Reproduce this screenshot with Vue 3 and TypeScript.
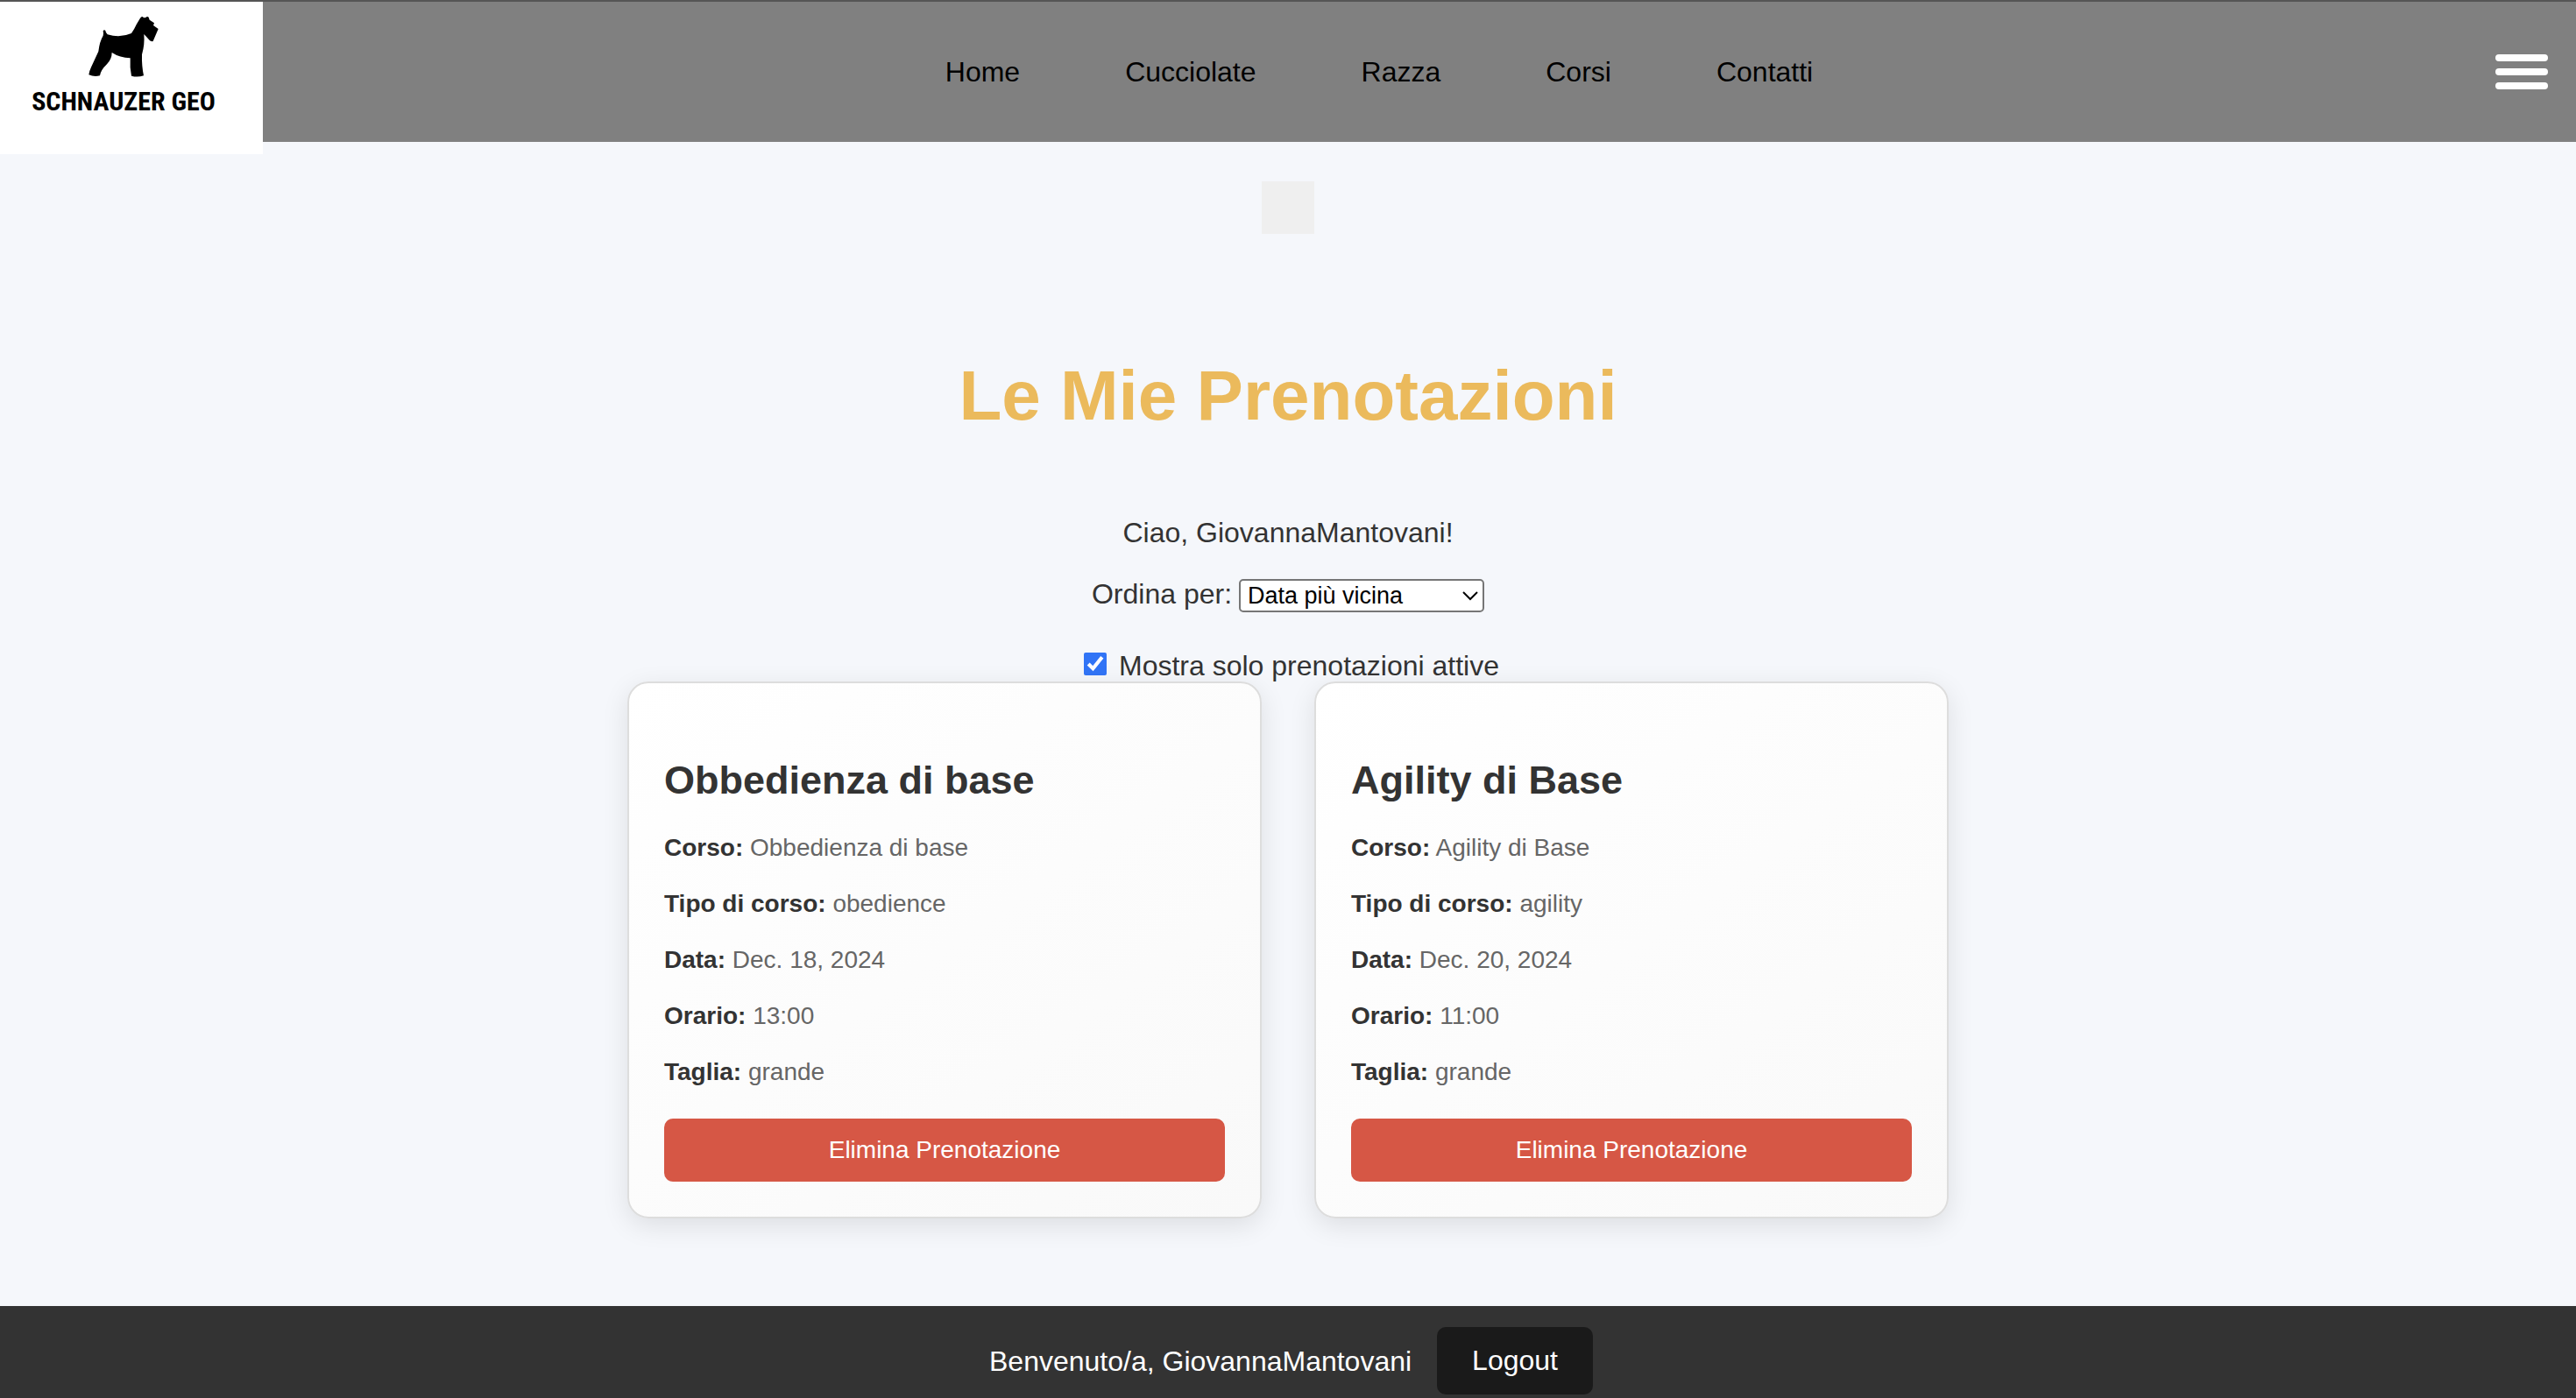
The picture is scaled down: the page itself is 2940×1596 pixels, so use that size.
<script setup lang="ts">
import { ref, computed } from 'vue'

interface Booking {
  id: number
  course: string
  type: string
  date: string
  time: string
  size: string
  day: number
}

const username = 'GiovannaMantovani'
const links: string[] = ['Home', 'Cucciolate', 'Razza', 'Corsi', 'Contatti']
const order = ref<'asc' | 'desc'>('asc')
const onlyActive = ref(true)

const bookings = ref<Booking[]>([
  { id: 1, course: 'Obbedienza di base', type: 'obedience', date: 'Dec. 18, 2024', time: '13:00', size: 'grande', day: 18 },
  { id: 2, course: 'Agility di Base', type: 'agility', date: 'Dec. 20, 2024', time: '11:00', size: 'grande', day: 20 },
])

const sorted = computed(() =>
  [...bookings.value].sort((a, b) => (order.value === 'asc' ? a.day - b.day : b.day - a.day)),
)

function remove(id: number) {
  bookings.value = bookings.value.filter((b) => b.id !== id)
}
</script>

<template>
  <div class="page">
    <header class="header">
      <a class="logo" href="#" aria-label="Schnauzer Geo">
        <svg class="dog" viewBox="300 52 246 213" aria-hidden="true">
          <path d="M304 254Q306 240 312 228L337 174Q341 140 353 120Q355 112 353 104Q357 98 361 103Q362 111 368 116Q412 129 450 112Q460 98 467 82L480 60Q485 53 489 56L492 59L499 58Q504 52 509 57L512 66L528 77L525 85L542 97L524 139Q519 141 513 137L493 115Q496 150 486 185Q485 225 492 257Q470 264 450 258Q444 230 446 197Q410 196 383 178Q383 200 366 218Q345 238 342 257Q322 262 304 254Z" />
        </svg>
        <span class="logo-text">SCHNAUZER GEO</span>
      </a>
      <nav class="nav">
        <a v-for="link in links" :key="link" href="#">{{ link }}</a>
      </nav>
      <button class="menu" type="button" aria-label="Menu">
        <span></span><span></span><span></span>
      </button>
    </header>

    <main class="main">
      <button class="blank" type="button" aria-label="Apri"></button>
      <h1>Le Mie Prenotazioni</h1>
      <p class="hello">Ciao, {{ username }}!</p>
      <div class="sort">
        <label for="order">Ordina per:</label>
        <span class="select">
          <select id="order" v-model="order">
            <option value="asc">Data più vicina</option>
            <option value="desc">Data più lontana</option>
          </select>
          <svg viewBox="0 0 18 11" aria-hidden="true"><path d="M1 1l8 8 8-8" /></svg>
        </span>
      </div>
      <div class="filter">
        <input id="active" v-model="onlyActive" type="checkbox" />
        <label for="active">Mostra solo prenotazioni attive</label>
      </div>

      <section class="cards">
        <article v-for="b in sorted" :key="b.id" class="card">
          <h2>{{ b.course }}</h2>
          <div class="details">
            <p><strong>Corso:</strong> {{ b.course }}</p>
            <p><strong>Tipo di corso:</strong> {{ b.type }}</p>
            <p><strong>Data:</strong> {{ b.date }}</p>
            <p><strong>Orario:</strong> {{ b.time }}</p>
            <p><strong>Taglia:</strong> {{ b.size }}</p>
          </div>
          <button class="delete" type="button" @click="remove(b.id)">Elimina Prenotazione</button>
        </article>
      </section>
    </main>

    <footer class="footer">
      <span>Benvenuto/a, {{ username }}</span>
      <button class="logout" type="button">Logout</button>
    </footer>
  </div>
</template>

<style>
body {
  background: #f5f7fb;
}
</style>

<style scoped>
.page {
  box-sizing: border-box;
  min-height: 100vh;
  display: flex;
  flex-direction: column;
  background: #f5f7fb;
  color: #333;
  font-family: "Liberation Sans", Arial, sans-serif;
  font-size: 32px;
  line-height: 36px;
}

button {
  border: 0;
  padding: 0;
  font-family: inherit;
  cursor: pointer;
}

h1,
h2,
p {
  margin: 0;
}

.header {
  display: flex;
  align-items: center;
  justify-content: space-between;
  height: 160px;
  padding-right: 32px;
  border-top: 2px solid #555;
  background: #808080;
}

.logo {
  align-self: flex-start;
  box-sizing: border-box;
  width: 300px;
  height: 174px;
  padding: 16px 18px 0 0;
  display: flex;
  flex-direction: column;
  align-items: center;
  gap: 9px;
  background: #fff;
  color: #000;
  text-decoration: none;
}

.dog {
  width: 82px;
  height: 71px;
  fill: #000;
}

.logo-text {
  font-family: "Roboto Condensed", "Liberation Sans", sans-serif;
  font-size: 30px;
  font-weight: 700;
  line-height: 36px;
  white-space: nowrap;
}

.nav {
  display: flex;
  gap: 120px;
}

.nav a {
  color: #000;
  text-decoration: none;
}

.menu {
  display: flex;
  flex-direction: column;
  gap: 8px;
  width: 60px;
  background: none;
}

.menu span {
  height: 8px;
  border-radius: 4px;
  background: #fff;
}

.main {
  flex: 1;
  display: flex;
  flex-direction: column;
  align-items: center;
  padding: 45px 40px 100px;
}

.blank {
  width: 60px;
  height: 60px;
  background: #efefef;
}

h1 {
  margin-top: 137px;
  color: #ebba5c;
  font-size: 80px;
  line-height: 96px;
}

.hello {
  margin-top: 90px;
}

.sort {
  display: flex;
  align-items: baseline;
  gap: 8px;
  margin-top: 34px;
}

.select {
  position: relative;
  display: flex;
}

.select select {
  box-sizing: border-box;
  width: 280px;
  height: 38px;
  margin: 0;
  padding: 0 8px;
  appearance: none;
  border: 2px solid #767676;
  border-radius: 5px;
  background: #fff;
  color: #000;
  font-family: inherit;
  font-size: 27px;
}

.select svg {
  position: absolute;
  right: 7px;
  top: 50%;
  width: 18px;
  height: 11px;
  margin-top: -5px;
  fill: none;
  stroke: #000;
  stroke-width: 2;
  pointer-events: none;
}

.filter {
  display: flex;
  align-items: center;
  margin-top: 43px;
}

.filter input {
  width: 26px;
  height: 26px;
  margin: 0 14px 4px 8px;
  accent-color: #3174f6;
}

.cards {
  align-self: stretch;
  display: grid;
  grid-template-columns: repeat(2, minmax(0, 724px));
  justify-content: center;
  gap: 60px;
}

.card {
  box-sizing: border-box;
  padding: 40px;
  border: 2px solid #ddd;
  border-radius: 24px;
  background: linear-gradient(145deg, #fff, #f9f9f9);
  box-shadow: 0 8px 30px rgba(0, 0, 0, 0.1);
}

h2 {
  margin-top: 45px;
  font-size: 45px;
  line-height: 52px;
}

.details {
  display: flex;
  flex-direction: column;
  gap: 32px;
  margin: 35px 0 37px;
  color: #666;
  font-size: 28px;
  line-height: 32px;
}

.details strong {
  color: #333;
}

.delete {
  display: block;
  width: 100%;
  height: 72px;
  border-radius: 10px;
  background: #d65745;
  color: #fff;
  font-size: 28px;
}

.footer {
  display: flex;
  align-items: center;
  justify-content: center;
  gap: 29px;
  padding: 24px 0 4px 7px;
  background: #333;
  color: #fff;
}

.logout {
  padding: 20px 40px;
  border-radius: 10px;
  background: #1a1a1a;
  color: #fff;
  font-size: 32px;
  line-height: 37px;
}
</style>
